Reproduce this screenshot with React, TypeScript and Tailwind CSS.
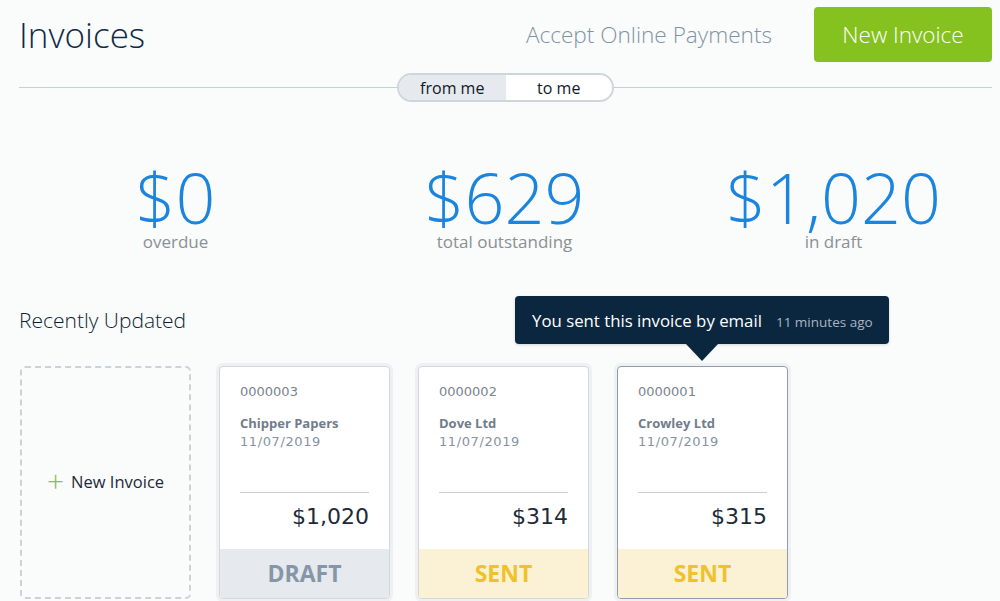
import React from "react";

type Invoice = {
  number: string;
  name: string;
  date: string;
  amount: string;
  status: "DRAFT" | "SENT";
  selected?: boolean;
};

const invoices: Invoice[] = [
  { number: "0000003", name: "Chipper Papers", date: "11/07/2019", amount: "$1,020", status: "DRAFT" },
  { number: "0000002", name: "Dove Ltd", date: "11/07/2019", amount: "$314", status: "SENT" },
  { number: "0000001", name: "Crowley Ltd", date: "11/07/2019", amount: "$315", status: "SENT", selected: true },
];

const stats = [
  { value: "$0", label: "overdue" },
  { value: "$629", label: "total outstanding" },
  { value: "$1,020", label: "in draft" },
];

const Tooltip: React.FC = () => (
  <div className="absolute left-[-102px] top-[-70px] z-10">
    <div className="flex items-baseline gap-[14px] whitespace-nowrap bg-[#0b2740] rounded-[4px] h-[48px] w-[374px] pl-[17px] pt-[12px] shadow-[0_1px_3px_rgba(0,0,0,0.15)]">
      <span className="text-white text-[16.8px]">You sent this invoice by email</span>
      <span className="text-[#a9b4c0] text-[13.5px]">11 minutes ago</span>
    </div>
    <div className="ml-[171px] w-0 h-0 border-l-[16px] border-r-[16px] border-t-[17px] border-l-transparent border-r-transparent border-t-[#0b2740]" />
  </div>
);

const InvoiceCard: React.FC<{ inv: Invoice }> = ({ inv }) => {
  const draft = inv.status === "DRAFT";
  return (
    <div className="relative">
      {inv.selected && <Tooltip />}
      <div
        className={`w-[171px] h-[233px] bg-white rounded-[4px] border flex flex-col overflow-hidden shadow-[0_0_0_3px_#eef0f2] ${
          inv.selected ? "border-[#8d9db0]" : "border-[#d3d8de]"
        }`}
      >
        <div className="flex-1 px-[20px] pt-[16px] font-['DejaVu_Sans',sans-serif]">
          <div className="text-[13px] text-[#7b848e] leading-[18px]">{inv.number}</div>
          <div className="mt-[13px] text-[13px] font-bold text-[#707d8b] leading-[18px] font-['Open_Sans',sans-serif]">
            {inv.name}
          </div>
          <div className="mt-[1px] text-[13px] text-[#8793a0] leading-[18px] tracking-[0.6px]">{inv.date}</div>
          <div className="mt-[41px] border-t border-[#c9cfd6]" />
          <div className="mt-[10px] text-right text-[22px] text-[#1d2a3a] leading-[28px]">{inv.amount}</div>
        </div>
        <div
          className={`h-[49px] flex items-center justify-center text-[23px] font-bold ${
            draft ? "bg-[#e6e9ed] text-[#8596a8]" : "bg-[#fbf2d5] text-[#efc12c]"
          }`}
        >
          {inv.status}
        </div>
      </div>
    </div>
  );
};

const App: React.FC = () => {
  return (
    <main className="w-[1000px] h-[601px] overflow-hidden bg-[#fafbfb] font-['Open_Sans',sans-serif]">
      <header className="flex items-center justify-between pl-[19px] pr-[8px] pt-[7px]">
        <h1 className="text-[35px] font-light text-[#0e2a47] leading-none">Invoices</h1>
        <div className="flex items-center gap-[42px]">
          <a className="text-[22.6px] font-light text-[#8193a5]">Accept Online Payments</a>
          <button className="w-[178px] h-[55px] rounded-[4px] bg-[#85c220] text-white text-[22.5px] font-light">
            New Invoice
          </button>
        </div>
      </header>

      <div className="flex items-center ml-[19px] mr-[8px] mt-[11px]">
        <div className="flex-1 border-t border-[#c9cfd6]" />
        <div className="flex w-[217px] h-[29px] rounded-full border-2 border-[#cfd5dc] overflow-hidden text-[16px] text-[#0e1a2a]">
          <div className="flex-1 flex items-center justify-center bg-[#e6e9ed]">from me</div>
          <div className="flex-1 flex items-center justify-center bg-white">to me</div>
        </div>
        <div className="flex-1 border-t border-[#c9cfd6]" />
      </div>

      <section className="grid grid-cols-3 pl-[11px] pr-[2px] mt-[64px]">
        {stats.map((s) => (
          <div key={s.label} className="flex flex-col items-center">
            <div className="text-[70px] font-light text-[#1a84de] leading-[62px]">{s.value}</div>
            <div className="text-[17px] text-[#8b9096] leading-[22px] mt-[3px]">{s.label}</div>
          </div>
        ))}
      </section>

      <h2 className="ml-[19px] mt-[53px] text-[21px] font-light text-[#0e1f33] leading-[28px]">Recently Updated</h2>

      <section className="flex gap-[28px] ml-[20px] mt-[32px]">
        <div className="w-[171px] h-[233px] rounded-[5px] border-2 border-dashed border-[#cdd2d7] flex items-center justify-center gap-[7px]">
          <span className="text-[#8fc046] text-[30px] font-light leading-none -mt-[4px]">+</span>
          <span className="text-[16.5px] text-[#1d2a3a]">New Invoice</span>
        </div>
        {invoices.map((inv) => (
          <InvoiceCard key={inv.number} inv={inv} />
        ))}
      </section>
    </main>
  );
};

export default App;
